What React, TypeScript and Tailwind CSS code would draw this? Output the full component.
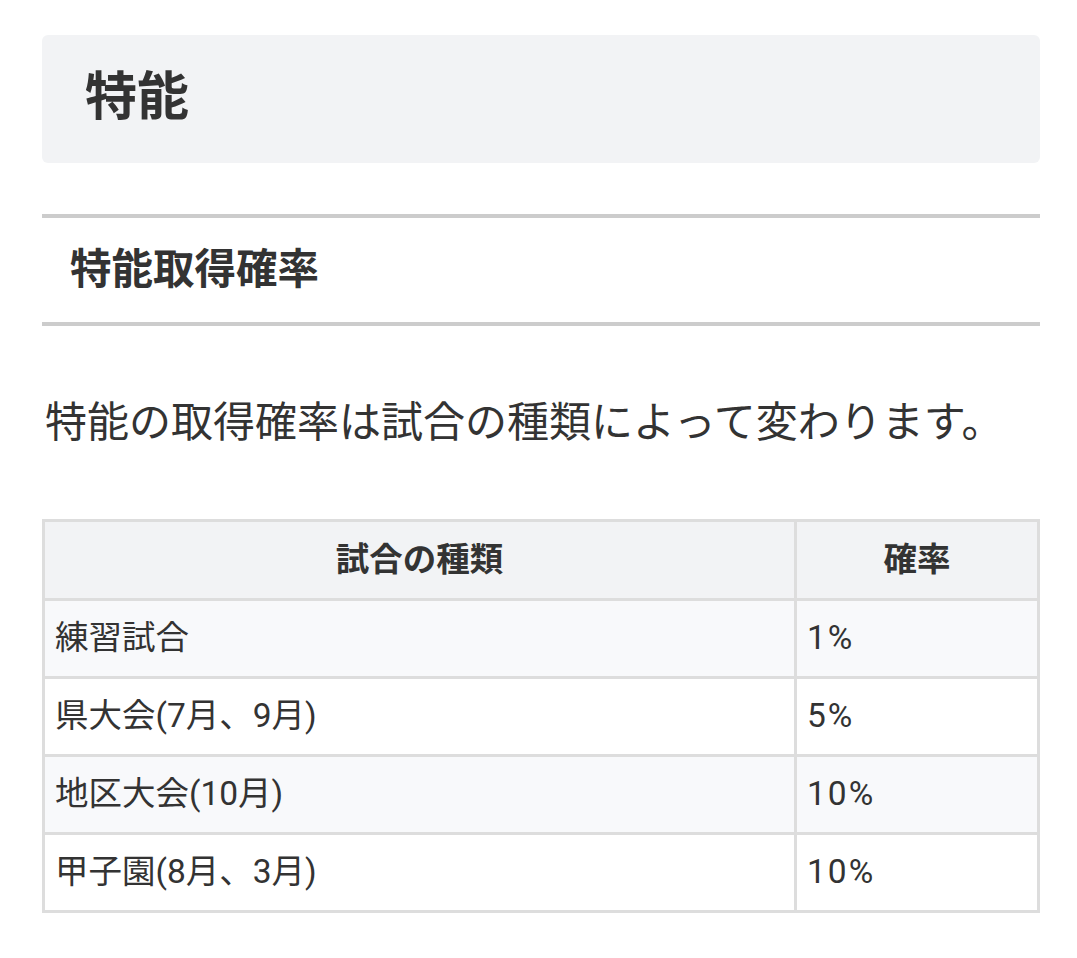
const rows = [
  { name: "練習試合", rate: "1%" },
  { name: "県大会(7月、9月)", rate: "5%" },
  { name: "地区大会(10月)", rate: "10%" },
  { name: "甲子園(8月、3月)", rate: "10%" },
];

const App = () => {
  return (
    <div
      className="bg-white min-h-[958px] pt-[35px] pl-[42px] pr-[37px] text-[#333]"
      style={{ fontFamily: "Roboto, 'Noto Sans CJK JP', sans-serif" }}
    >
      <div className="h-[128px] rounded-md bg-[#f2f3f5] flex items-center pl-[43px]">
        <h1 className="text-[52px] font-bold leading-none pb-[2px]">特能</h1>
      </div>

      <div className="mt-[51px] h-[112px] border-y-4 border-[#cccccc] flex items-center pl-[28px]">
        <h2 className="text-[41.5px] font-bold leading-none">特能取得確率</h2>
      </div>

      <p className="mt-[67px] pl-[3px] text-[42px] leading-[60px]">
        特能の取得確率は試合の種類によって変わります。
      </p>

      <table className="mt-[66px] w-full border-collapse text-[33.5px]">
        <thead>
          <tr className="bg-[#f2f3f5] h-[79px]">
            <th className="border-[3px] border-[#dddddd] font-bold text-center">試合の種類</th>
            <th className="border-[3px] border-[#dddddd] font-bold text-center w-[243px]">確率</th>
          </tr>
        </thead>
        <tbody>
          {rows.map((r, i) => (
            <tr key={r.name} className={i % 2 === 0 ? "bg-[#f8f9fb] h-[78px]" : "bg-white h-[78px]"}>
              <td className="border-[3px] border-[#dddddd] pl-[10px]">{r.name}</td>
              <td className="border-[3px] border-[#dddddd] pl-[10px] tracking-[2px]">{r.rate}</td>
            </tr>
          ))}
        </tbody>
      </table>
    </div>
  );
};

export default App;
